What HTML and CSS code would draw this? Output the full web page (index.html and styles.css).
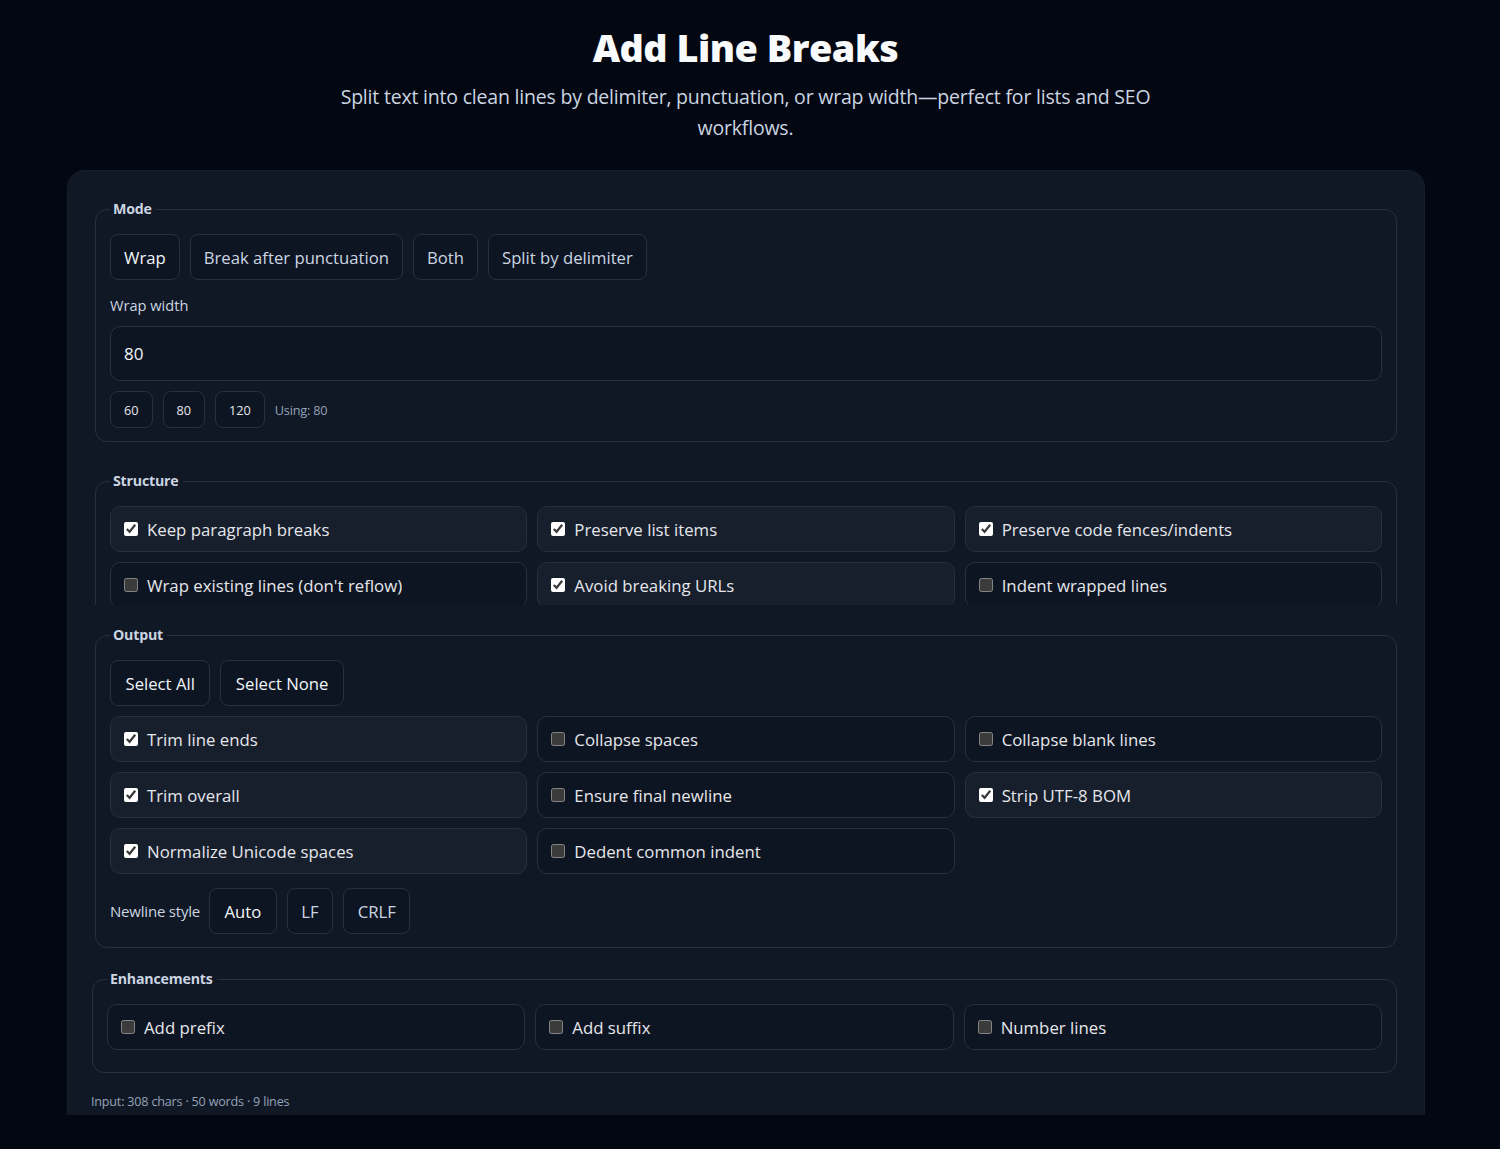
FILE: index.html
```html
<!DOCTYPE html>
<html lang="en">
<head>
<meta charset="utf-8">
<title>Add Line Breaks</title>
<link rel="stylesheet" href="styles.css">
</head>
<body>
<div class="page">
  <header class="hero">
    <h1 class="title">Add Line Breaks</h1>
    <p class="subtitle">Split text into clean lines by delimiter, punctuation, or wrap width—perfect for lists and SEO workflows.</p>
  </header>

  <main class="card">
    <fieldset class="group mode">
      <legend class="legend">Mode</legend>
      <div class="btn-row">
        <button class="btn active">Wrap</button>
        <button class="btn">Break after punctuation</button>
        <button class="btn">Both</button>
        <button class="btn">Split by delimiter</button>
      </div>
      <label class="field-label">Wrap width</label>
      <div class="input">80</div>
      <div class="preset-row">
        <button class="btn-sm">60</button>
        <button class="btn-sm">80</button>
        <button class="btn-sm">120</button>
        <span class="hint">Using: 80</span>
      </div>
    </fieldset>

    <div class="clip">
      <fieldset class="group">
        <legend class="legend">Structure</legend>
        <div class="grid">
          <label class="check on"><input type="checkbox" checked><span>Keep paragraph breaks</span></label>
          <label class="check on"><input type="checkbox" checked><span>Preserve list items</span></label>
          <label class="check on"><input type="checkbox" checked><span>Preserve code fences/indents</span></label>
          <label class="check"><input type="checkbox"><span>Wrap existing lines (don't reflow)</span></label>
          <label class="check on"><input type="checkbox" checked><span>Avoid breaking URLs</span></label>
          <label class="check"><input type="checkbox"><span>Indent wrapped lines</span></label>
        </div>
      </fieldset>
    </div>

    <fieldset class="group output">
      <legend class="legend">Output</legend>
      <div class="btn-row">
        <button class="btn active">Select All</button>
        <button class="btn active">Select None</button>
      </div>
      <div class="grid">
        <label class="check on"><input type="checkbox" checked><span>Trim line ends</span></label>
        <label class="check"><input type="checkbox"><span>Collapse spaces</span></label>
        <label class="check"><input type="checkbox"><span>Collapse blank lines</span></label>
        <label class="check on"><input type="checkbox" checked><span>Trim overall</span></label>
        <label class="check"><input type="checkbox"><span>Ensure final newline</span></label>
        <label class="check on"><input type="checkbox" checked><span>Strip UTF-8 BOM</span></label>
        <label class="check on"><input type="checkbox" checked><span>Normalize Unicode spaces</span></label>
        <label class="check"><input type="checkbox"><span>Dedent common indent</span></label>
      </div>
      <div class="newline-row">
        <span class="field-label inline">Newline style</span>
        <button class="btn active">Auto</button>
        <button class="btn">LF</button>
        <button class="btn">CRLF</button>
      </div>
    </fieldset>

    <fieldset class="group enh">
      <legend class="legend">Enhancements</legend>
      <div class="grid">
        <label class="check"><input type="checkbox"><span>Add prefix</span></label>
        <label class="check"><input type="checkbox"><span>Add suffix</span></label>
        <label class="check"><input type="checkbox"><span>Number lines</span></label>
      </div>
    </fieldset>

    <p class="stats">Input: 308 chars · 50 words · 9 lines</p>
  </main>
</div>
</body>
</html>
```

FILE: styles.css
```css
* { box-sizing: border-box; }

html, body {
  margin: 0;
  background: #030711;
  color: #e5e7eb;
  font-family: "Open Sans", "Noto Sans", sans-serif;
  color-scheme: dark;
}

.page {
  width: 1491px;
  padding-top: 24px;
}

.hero {
  text-align: center;
}

.title {
  margin: 0;
  font-size: 37.8px;
  line-height: 48px;
  font-weight: 800;
  color: #f8fafc;
  letter-spacing: -0.5px;
}

.subtitle {
  width: 860px;
  margin: 9px auto 0;
  font-size: 19.5px;
  line-height: 31px;
  color: #cbd5e1;
  letter-spacing: -0.2px;
}

.card {
  margin: 27px 66px 0 67px;
  height: 945px;
  background: #101725;
  border: 1px solid #161e2c;
  border-bottom: none;
  border-radius: 18px 18px 0 0;
  padding: 28px 27px 0;
}

.group {
  margin: 0;
  border: 1px solid #263043;
  border-radius: 12px;
  padding: 15px 14px 14px;
  min-width: 0;
}

.group.mode {
  padding-bottom: 13px;
}

.legend {
  padding: 0 4px 0 3px;
  margin-left: 0;
  font-size: 14.2px;
  line-height: 20px;
  font-weight: 700;
  color: #cbd5e1;
  letter-spacing: -0.2px;
}

.btn-row {
  display: flex;
  gap: 10px;
}

.btn {
  height: 46px;
  padding: 0 13px;
  border: 1px solid #263043;
  border-radius: 8px;
  background: #0e1522;
  color: #cbd5e1;
  font-family: inherit;
  font-size: 16.7px;
}

.output .btn-row .btn {
  padding: 0 14.5px;
}

.btn.active {
  color: #f1f5f9;
}

.field-label {
  display: block;
  margin-top: 15px;
  font-size: 14.6px;
  line-height: 20px;
  color: #cbd5e1;
}

.field-label.inline {
  display: inline;
  margin: 0;
}

.input {
  margin-top: 11px;
  height: 55px;
  border: 1px solid #263043;
  border-radius: 10px;
  background: #0e1522;
  padding: 0 13px;
  display: flex;
  align-items: center;
  font-size: 17px;
  color: #f1f5f9;
}

.preset-row {
  margin-top: 10px;
  display: flex;
  align-items: center;
  gap: 10px;
}

.btn-sm {
  height: 37px;
  padding: 0 13px;
  border: 1px solid #263043;
  border-radius: 8px;
  background: #0e1522;
  color: #e5e7eb;
  font-family: inherit;
  font-size: 12.7px;
}

.hint {
  font-size: 12.7px;
  color: #94a3b8;
  letter-spacing: -0.2px;
}

.clip {
  margin-top: 29px;
  height: 134px;
  overflow: hidden;
}

.grid {
  display: grid;
  grid-template-columns: repeat(3, 1fr);
  gap: 10px;
}

.check {
  height: 46px;
  display: flex;
  align-items: center;
  gap: 9px;
  padding: 0 13px;
  border: 1px solid #263043;
  border-radius: 10px;
  background: #0e1522;
  font-size: 16.8px;
  color: #e5e7eb;
}

.check.on {
  background: #171f2d;
}

.check input {
  margin: 0;
  width: 14px;
  height: 14px;
  accent-color: #ffffff;
}

.output {
  margin-top: 20px;
  padding-bottom: 13px;
}

.output .grid {
  margin-top: 10px;
}

.newline-row {
  margin-top: 14px;
  display: flex;
  align-items: center;
  gap: 10px;
}

.newline-row .field-label {
  font-size: 15px;
  margin-right: -1px;
  letter-spacing: -0.2px;
}

.newline-row .btn {
  padding: 0 13.5px;
}

.newline-row .btn.active {
  padding: 0 14.5px;
}

.enh {
  margin: 21px 0 0 -3px;
  padding-bottom: 22px;
}

.stats {
  margin: 20px 0 0 -4px;
  font-size: 12.6px;
  color: #94a3b8;
  letter-spacing: -0.2px;
}
```
